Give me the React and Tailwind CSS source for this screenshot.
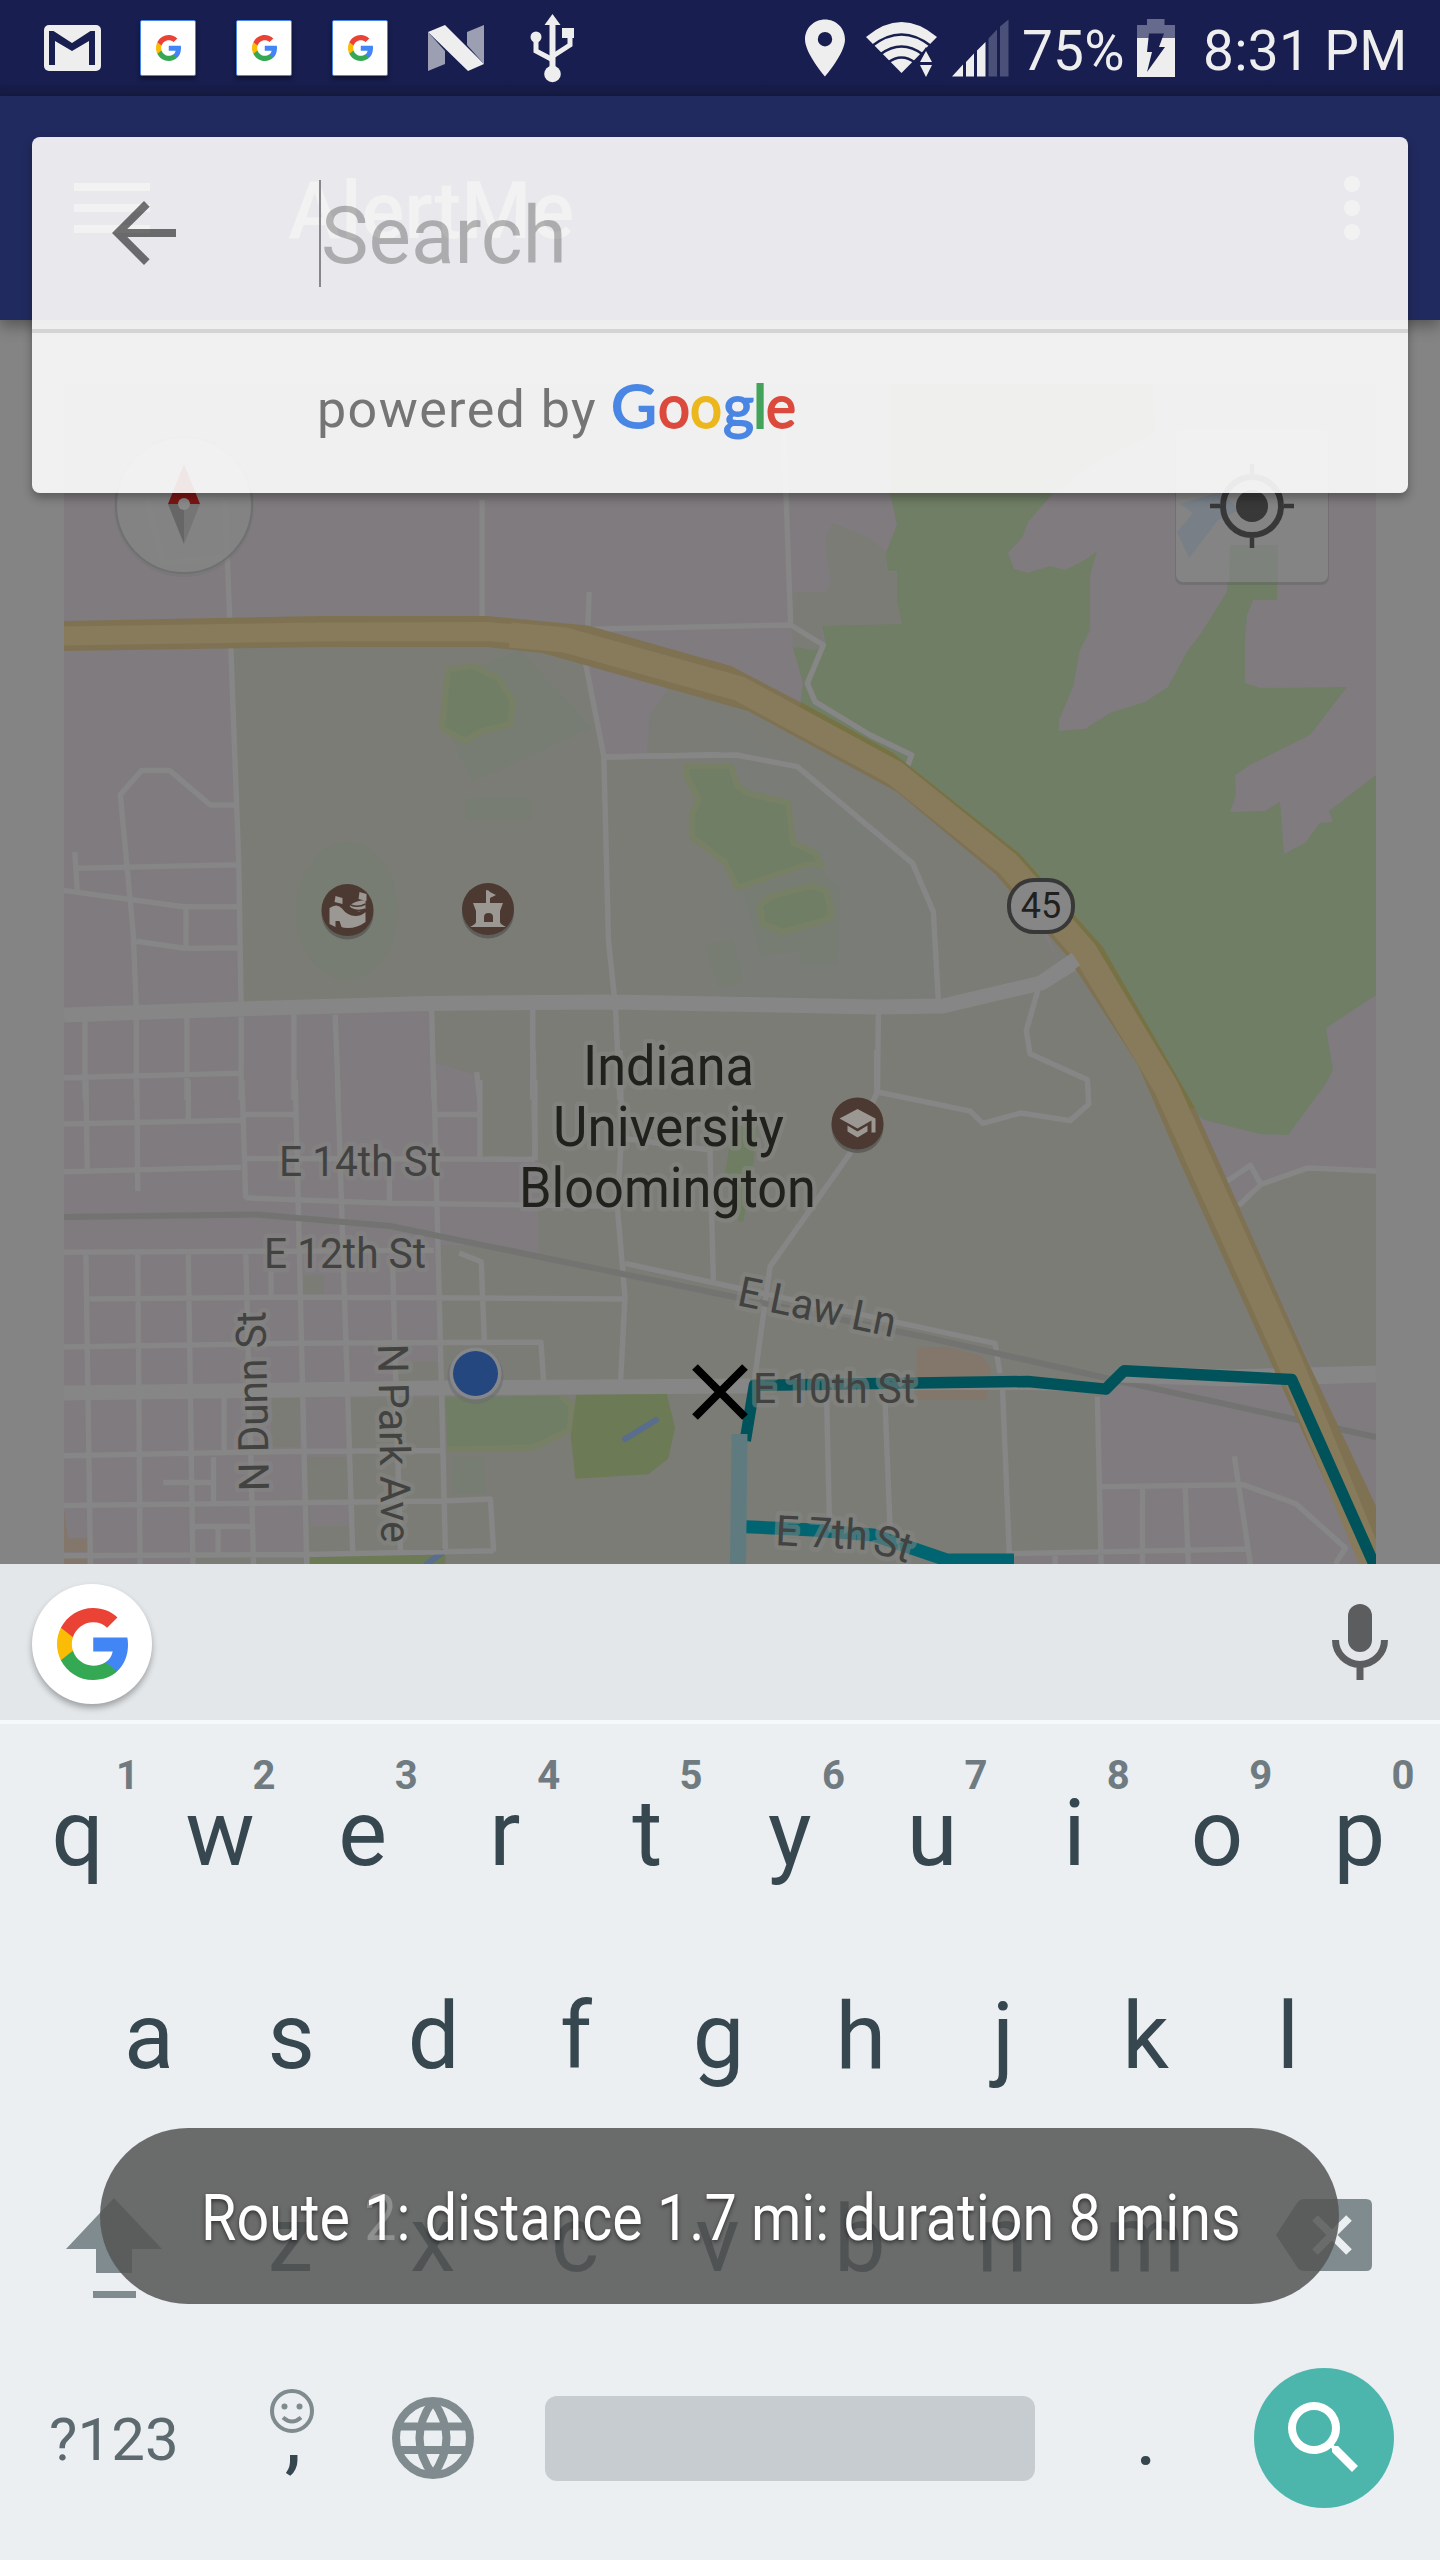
import React from "react";

const GoogleG = ({ className }) => (
  <svg viewBox="1 1 21.56 22" preserveAspectRatio="none" className={className}>
    <path fill="#4285F4" d="M22.56 12.25c0-.78-.07-1.53-.2-2.25H12v4.26h5.92c-.26 1.37-1.04 2.53-2.21 3.31v2.77h3.57c2.08-1.92 3.28-4.74 3.28-8.09z" />
    <path fill="#34A853" d="M12 23c2.97 0 5.46-.98 7.28-2.66l-3.57-2.77c-.98.66-2.23 1.06-3.71 1.06-2.86 0-5.29-1.93-6.16-4.53H2.18v2.84C3.99 20.53 7.7 23 12 23z" />
    <path fill="#FBBC05" d="M5.84 14.09c-.22-.69-.35-1.43-.35-2.09s.13-1.43.35-2.09V7.07H2.18C1.43 8.55 1 10.22 1 12s.43 3.45 1.18 4.93l2.85-2.22.81-.62z" />
    <path fill="#EA4335" d="M12 5.38c1.62 0 3.06.56 4.21 1.64l3.15-3.15C17.45 2.09 14.97 1 12 1 7.7 1 3.99 3.47 2.18 7.07l3.66 2.84c.87-2.6 3.3-4.53 6.16-4.53z" />
  </svg>
);

const NotificationSquare = ({ className }) => (
  <div className={`flex h-14 w-14 shrink-0 items-center justify-center rounded-[2px] border border-[#4a86e8] bg-white shadow-[0_3px_4px_rgba(0,0,0,0.4)] ${className}`}>
    <GoogleG className="h-[26px] w-[25px]" />
  </div>
);

function StatusBar() {
  return (
    <header className="flex h-24 items-center bg-gradient-to-b from-[#181e4f] from-85% to-[#151b42] pl-[44px] text-[55px] leading-[96px] text-[#eeeeee]">
      <svg viewBox="44 0 57 96" className="h-24 w-[57px] shrink-0">
        <rect x="44" y="25" width="57" height="46" rx="5" fill="#eee" />
        <path d="M49 65V31h4.500L72 43l18.500-12H95v34h-6V41L72 51 55 41v24z" fill="#181e4f" />
      </svg>
      <NotificationSquare className="ml-[39px]" />
      <NotificationSquare className="ml-10" />
      <NotificationSquare className="ml-10" />
      <svg viewBox="428 0 56 96" className="ml-10 h-24 w-14 shrink-0">
        <path d="M428 32l17 19v13l-17 7zM467 32l17-7v39l-17-19z" fill="#9c9eb2" />
        <path d="M428 32l17-7 39 39-16 7z" fill="#eee" />
      </svg>
      <svg viewBox="530 0 45 96" className="ml-[46px] h-24 w-[45px] shrink-0" fill="#eee">
        <path d="M552.500 14l8 11h-5v42h-6V25h-5z" />
        <circle cx="552.500" cy="74" r="8.300" />
        <circle cx="536" cy="37" r="5.500" />
        <path d="M562 28h12v10h-12z" />
        <path d="M536 38v13l17 9M570 37v8l-17 11" fill="none" stroke="#eee" strokeWidth="5" />
      </svg>
      <svg viewBox="804 0 42 96" className="ml-[229px] h-24 w-[42px] shrink-0">
        <path fillRule="evenodd" fill="#eee" d="M825 19.500c-11 0-20 8.500-20 20 0 14 20 37 20 37s20-23 20-37c0-11.500-9-20-20-20zm0 12.500a7.200 7.200 0 110 14.400 7.200 7.200 0 010-14.400z" />
      </svg>
      <svg viewBox="866 0 72 96" className="ml-5 h-24 w-[72px] shrink-0">
        <path fill="#eee" d="M901.500 73L866 37q35.500-30 71 0z" />
        <g fill="none" stroke="#181e4f" strokeWidth="2.500">
          <path d="M872 46q29.500-23 59 0" />
          <path d="M880 54.500q21.500-16 43 0" />
          <path d="M888 62.500q13.500-10 27 0" />
        </g>
        <path fill="#181e4f" d="M926 47l12 22v12h-20V60z" />
        <path fill="#eee" d="M926 51l6 11h-12zM926 77l-6-12h12z" />
      </svg>
      <svg viewBox="951 0 58 96" className="ml-[13px] h-24 w-[58px] shrink-0">
        <path fill="#eee" d="M952 76.500l11-12v12zM966 76.500V62l8-8.500v23zM977 76.500V50.500l8.500-8.500v34.500z" />
        <path fill="#4a5078" d="M988.500 76.500v-38l8.500-9v47zM1000 76.500v-50l8.500-7v57z" />
      </svg>
      <span className="ml-[13px] w-[112px] shrink-0 pt-1.5 tracking-[0.2px]">75%</span>
      <svg viewBox="1136 0 40 96" className="ml-[2px] h-24 w-10 shrink-0">
        <path fill="#666b8d" d="M1137 38V25h10v-6h17.500v6h10.500v13z" />
        <path fill="#eee" d="M1137 38h38v39h-38z" />
        <path fill="#181e4f" d="M1149 33.500h15l-5 13.500h6l-18 25 5-20h-5z" />
      </svg>
      <span className="ml-[27px] shrink-0 whitespace-nowrap pt-1.5 tracking-[0.3px]">8:31 PM</span>
    </header>
  );
}

function AppBar() {
  return (
    <div className="relative flex h-56 items-center bg-[#212a5e] pl-[74px] shadow-[0_6px_14px_rgba(0,0,0,0.35)]">
      <div className="flex w-[76px] flex-col gap-[13px]">
        <i className="h-2 bg-[#8c8c8c]" />
        <i className="h-2 bg-[#8c8c8c]" />
        <i className="h-2 bg-[#8c8c8c]" />
      </div>
      <h1 className="ml-[138px] pt-[5px] text-[80px] font-medium leading-none text-[#8c8c8c]">AlertMe</h1>
      <div className="ml-auto mr-20 flex flex-col gap-2">
        <i className="h-4 w-4 rounded-full bg-[#8c8c8c]" />
        <i className="h-4 w-4 rounded-full bg-[#8c8c8c]" />
        <i className="h-4 w-4 rounded-full bg-[#8c8c8c]" />
      </div>
    </div>
  );
}

// Map sheets: every sheet keeps its own local grid.
const NW = "translate(0 500) scale(.4592 .3827)";
const NE = "translate(720 560) scale(.4592 .3827)";
const SW = "translate(0 1080) scale(.4592 .3827)";
const SE = "translate(720 1060) scale(.4592 .3827)";
const MID = "translate(560 490) scale(.33333)";
const CORE = "translate(480 1050) scale(.33333)";

const OLIVE = "#7b7c76";
const FOREST = "#707e65";
const FAINT = "#777d72";
const PURPLE = "#7f7b7f";

const streets = [
  [NW, "M490 0L500 300 520 950 525 1320M1050 0V303M1283 240L1280 340M1275 425L1315 670 1325 1150 1338 1300M1315 672L1568 665M510 797H458L370 707H308L262 770 290 1130 297 1330M163 920L168 1020M170 962L515 953M139 1020L400 1063 520 1062M405 1065V1170M297 1153L405 1172 520 1170M320 0L355 165 495 150M185 1350V1568M297 1350V1568M407 1350V1568M525 1350V1568M640 1345V1568M730 1345L737 1568M940 1335L945 1568M1160 1325V1568M1340 1320L1350 1568M139 1510L520 1498M1038 1495L1045 1568"],
  [MID, "M670 -240L678 10 692 405 790 465 742 580 765 635 930 735 1055 795 1040 835M90 418L692 405M130 800L530 795 712 830 1058 1120 1120 1265 1135 1530"],
  [NE, "M345 1180L343 1390 545 1440 572 1472 655 1445 762 1465 803 1422 800 1358 675 1290 667 1230 692 1125"],
  [CORE, "M1190 0V130L1110 310 870 650 822 1000M160 0L165 325M420 0L425 250 412 470 435 740 422 990M435 640L800 720 1545 880 1560 970M425 265L690 300 700 690M1040 1050L1048 1400M1215 1050L1230 1430"],
  [SW, "M139 115L525 105M139 240L525 228M530 90H640M950 90H1040M530 205L1165 207M535 308L850 322 1345 330M139 450L945 445M195 572L660 567 1360 572M139 698L650 688 1178 685 1184 790M139 982L660 970 965 968M139 1112L965 1100 1068 1095 1075 1232M139 1243L665 1240 1075 1230M355 1052H465M425 1167H545M475 1167V1240M187 0L190 235M187 450L197 1265M298 0L300 290M300 450L305 1265M410 0V105M410 450L420 1265M527 0L535 310M535 450L552 1265M590 500V565M643 0L668 1265M735 0L768 1230M848 205V320M855 480L872 1230M945 0L970 1235M1045 0V210M1165 0V210M488 830V970M465 985V1105M1000 452L1048 475 1055 690"],
  [SE, "M822 880L830 1317M615 850L630 1290M830 1115L1140 1110 1255 1160 1362 1275 1340 1317M630 1290L1155 1278M920 1115V1317M1013 1115L1020 1317M1120 1035L1155 1317M730 1290V1317M1100 320L1155 275 1178 325 1280 282 1429 290M1178 325L1130 380"],
];

const Label = ({ x, y, w, size = 42, rot = 0, dark, children }) => (
  <text
    transform={`translate(${x} ${y}) rotate(${rot})`}
    textLength={w}
    lengthAdjust="spacingAndGlyphs"
    fontSize={size}
    fill={dark ? "#20201d" : "#424241"}
    stroke="#868683"
    strokeOpacity=".55"
    strokeWidth="9"
    strokeLinejoin="round"
    paintOrder="stroke"
    className="font-['Roboto',sans-serif]"
  >
    {children}
  </text>
);

const Pin = ({ x, y, children }) => (
  <g transform={`translate(${x} ${y})`}>
    <circle cy="3.500" r="26" fill="#5e5f5b" />
    <circle r="26" fill="#4c3932" />
    {children}
  </g>
);

function MapCanvas() {
  return (
    <svg viewBox="64 384 1312 1180" className="block h-[1180px] w-[1312px]">
      <rect x="64" y="384" width="1312" height="1180" fill={PURPLE} />

      {/* campus ground */}
      <g fill={OLIVE}>
        <path d="M232 636L500 632 585 650 700 690 890 775 1030 910 1100 1040 1290 1370 1101 1388V1551H1010V1564H193V1553H305V1457H350V1398H440V1245H538V1160H480V1076L436 1063 432 1010 244 1005z" />
        <path d="M833 523L867 537 887 552 888 572 898 572 903 623 820 627 825 650 793 647 790 592 825 592 831 583 825 540z" />
        <path transform={SE} d="M1130 385L1178 330 1280 285 1429 292V800H1290z" />
        <path d="M271 1398h29v49h-29zM352 1398h95v160h-95zM300 1275h24v20h-24zM398 1362h46v20h-46z" />
        <path d="M1040 910L1100 950 1195 1108 1300 1362H1200z" />
      </g>
      <path fill={PURPLE} d="M585 640L668 690 650 715 647 755 604 755 586 665zM483 1162h35v41h-35zM480 1210h58v44l-58-14zM310 1500h40v26h-40z" />
      <path transform={NE} fill="#7a7c79" d="M0 400L165 540 420 800 470 920 475 1140H0z" opacity=".5" />

      {/* faint lawns */}
      <g fill={FAINT}>
        <path d="M482 665L520 650 592 728 472 782 450 735zM466 798h66v22h-66z" />
        <ellipse cx="347" cy="911" rx="51" ry="69" />
        <path transform={MID} d="M550 1200L780 1130 840 1200 830 1420H720V1385L600 1395zM435 1365L520 1350 550 1480 475 1495z" />
        <path transform={SW} d="M985 985h70v95h-70z" />
      </g>

      {/* woods */}
      <path fill={FOREST} d="M890 384V493L897 525 886 553 888 571 897 571 897 600 902 624 822 626 826 645 815 650 793 647 803 683 800 705 900 770 1020 865 1100 960 1190 1110 1205 1120 1260 1134 1288 1135 1325 1085 1333 1070 1326 1028 1376 995V775L1329 811 1333 822 1320 823 1305 843 1284 854 1280 802 1265 811 1230 812 1236 795 1235 775 1250 765 1310 735 1347 687 1260 688 1245 683V640L1247 615 1253 600 1277 600 1278 540H1230L1227 592 1200 635 1188 650 1168 687 1145 702 1110 713 1085 729 1059 731V720L1073 687 1080 650 1090 630V575L1097 551 1085 560 1065 570 1050 566 1028 573 1014 569 1008 553 1022 538 1028 522 1053 493 1100 460 1155 435 1154 384z" />
      <path fill="#7a828b" d="M1180 504L1310 442 1326 465 1218 520 1189 558 1177 532 1193 513z" />
      <g fill={FOREST} stroke="#778064" strokeWidth="6">
        <path d="M448 670L473 666 498 678 513 701 510 724 482 731 465 741 442 728z" />
        <path d="M687 766H731L737 785 747 793 788 803 793 843 815 853 821 864 806 865 737 888 725 862 692 837V813L699 800 687 777z" />
        <path d="M760 905L772 896 811 886 826 891 831 914 825 920 783 932 763 924z" />
      </g>
      <path transform={CORE} fill="#6f7d62" d="M760 225L830 235 820 340 790 515 775 515 765 390 735 370z" />
      <g transform={SW}>
        <path d="M970 830L1215 825 1245 850 1240 915 1160 965 975 965z" fill={FOREST} />
        <path d="M1222 828L1245 850 1240 915 1160 960 975 965" fill="none" stroke="#778064" strokeWidth="6" vectorEffect="non-scaling-stroke" />
        <path d="M1255 822L1452 820 1470 910 1455 990 1412 1030 1253 1042 1243 930zM675 1240H970V1265H675z" fill="#6c7a55" />
        <path d="M139 1120L148 1198H190V1232H139zM139 1248H190V1265H139z" fill="#83766b" />
      </g>
      <path transform={SE} d="M428 752L500 750 570 775 590 805 580 888H428z" fill="#83766b" />
      <path d="M625 1439l31-19M427 1564l16-12" stroke="#596d8c" strokeWidth="6" strokeLinecap="round" />

      {/* streets */}
      {streets.map(([tf, d], i) => (
        <path key={i} transform={tf} d={d} fill="none" stroke="#868686" strokeWidth="5.500" strokeLinejoin="round" vectorEffect="non-scaling-stroke" />
      ))}
      <g fill="none" stroke="#737371" strokeWidth="6">
        <path d="M64 1217L257 1214.500 390 1226 720 1294 927 1337.500 1106 1378 1376 1437" />
      </g>
      <g fill="none" stroke="#868686" strokeLinejoin="round">
        <path strokeWidth="15" d="M64 1015L239 1009 427 1003.500 611 1002 720 1004 876 1007 943 1006 1041 983 1075 962" />
        <path strokeWidth="15" d="M64 1393L432 1388 750 1386" />
        <path strokeWidth="8" d="M750 1386L1030 1386 1100 1388" />
        <path strokeWidth="17" d="M1120 1374L1230 1378 1376 1374" />
      </g>

      {/* state road 45 */}
      <path fill="#7f7252" d="M64 621L321 616 487 616 588 625.500 731 666 798 701 893 753 1019 853 1103 947 1195 1108 1308 1362 1376 1506V1564H1363L1269 1358.500 1179 1160 1138 1065 1067 956 995 874 897 792 748 711 542 653 487 647 321 647 64 651z" />
      <path fill="none" stroke="#777243" strokeWidth="6" d="M800 705L892 756 1017 856 1100 949 1192 1109" />
      <g fill="none" stroke="#877b5b" strokeLinejoin="round">
        <path strokeWidth="19" d="M64 636L321 632 487 631.500 540 636" />
        <path strokeWidth="25" d="M510 635L565 640 739 688.500 895 773 1008 864 1085 952 1166 1087 1289 1360 1383 1590" />
      </g>
      <path stroke="#868686" strokeWidth="15" d="M1041 983L1076 959" />

      {/* routes */}
      <g transform={SE} fill="none">
        <path d="M55 995L75 850 670 840 840 860 880 812 1245 835 1427 1325" stroke="#00535a" strokeWidth="11.500" strokeLinejoin="round" vectorEffect="non-scaling-stroke" />
      </g>
      <path transform={CORE} fill="none" stroke="#006571" strokeWidth="13" vectorEffect="non-scaling-stroke" strokeLinejoin="round" d="M798 1430L1000 1440 1180 1455 1400 1530H1602" />
      <path d="M731.500 1434H747.500L746 1564H730z" fill="#5f7b80" />

      {/* labels */}
      <Label x={583} y={1084.500} w={171} size={56} dark>Indiana</Label>
      <Label x={553} y={1146} w={231} size={56} dark>University</Label>
      <Label x={519} y={1207} w={297} size={56} dark>Bloomington</Label>
      <Label x={279} y={1176} w={162}>E 14th St</Label>
      <Label x={264} y={1267.500} w={162}>E 12th St</Label>
      <Label x={269} y={1491} w={180} rot={-91.200}>N Dunn St</Label>
      <Label x={378} y={1344} w={199} rot={89}>N Park Ave</Label>
      <Label x={736} y={1305} w={160} rot={11.600}>E Law Ln</Label>
      <Label x={753} y={1403} w={162}>E 10th St</Label>
      <Label x={775} y={1545} w={92} rot={3}>E 7th</Label>
      <Label x={871} y={1552} w={38} rot={17}>St</Label>

      <rect x="1009" y="880" width="64" height="52" rx="25" fill="#868686" stroke="#383838" strokeWidth="4" />
      <text x="1041" y="918" textAnchor="middle" fontSize="36" fill="#20201f">45</text>

      {/* places */}
      <Pin x={347.500} y={910}>
        <path fill="#9b9793" d="M-18-2q7-5 12 0 6 8 14 8 6 0 10-4v10q-8 6-18 6-4 0-6-1l-2-6h-4v6l-6-3z" />
        <path fill="#9b9793" d="M-12-14l7 2v6l-8-2zM12-18l7 2v7l-8-2z" />
        <path d="M2-4q4-5 16-6v9q-8 6-16-3z" fill="#9b9793" />
        <path d="M3-5q8 3 15-1M4-1q7 3 14 0" stroke="#4c3932" strokeWidth="1.500" fill="none" />
      </Pin>
      <Pin x={488} y={909}>
        <path fill="#9b9793" fillRule="evenodd" d="M-15-6H-2v-13q3 0 4 2l6 3-6 3v5h13l-3 8v11q0 2 6 5h-36q6-3 6-5V2zM-4 13h9V8q0-4-4.500-4T-4 8z" />
      </Pin>
      <Pin x={857.500} y={1123.500}>
        <path fill="#9b9793" d="M0-14.500L18-5V9h-4V-3L0 5-18-5zM-10 2v6L0 14l10-6V2L0 8z" />
      </Pin>

      <circle cx="475.500" cy="1376" r="28" fill="#6c6e6e" opacity=".6" />
      <circle cx="475.500" cy="1373.500" r="26" fill="#85878b" />
      <circle cx="475.500" cy="1373.500" r="22.500" fill="#24477f" />
      <path d="M695 1367l50 50M745 1367l-50 50" stroke="#000" strokeWidth="8" />

      {/* compass and locate controls */}
      <circle cx="184" cy="507" r="70" fill="#6f6f6f" opacity=".25" />
      <circle cx="184" cy="505" r="68" fill="#848484" fillOpacity=".92" stroke="#6f7070" strokeWidth="2" />
      <path d="M184 464l16 40h-32z" fill="#7d1513" />
      <path d="M168 504h16v40z" fill="#666" />
      <path d="M184 504h16l-16 40z" fill="#757575" />
      <circle cx="184" cy="504" r="6" fill="#8a8a8a" />

      <rect x="1175" y="432" width="154" height="153" rx="8" fill="#5c5c5c" opacity=".35" />
      <rect x="1176" y="430" width="152" height="152" rx="7" fill="#848484" />
      <path fill="#787f87" d="M1180 504L1220 492 1240 510 1218 520 1189 558 1177 532 1193 513z" />
      <path fill="#7c8179" d="M1230 545h48v37h-49z" opacity=".7" />
      <g stroke="#383838" fill="none">
        <circle cx="1252" cy="506" r="29" strokeWidth="6" />
        <path strokeWidth="4.500" d="M1210 506h10M1284 506h10M1252 464v10M1252 538v10" />
      </g>
      <circle cx="1252" cy="506" r="16" fill="#383838" />
    </svg>
  );
}

function SearchCard() {
  return (
    <section className="absolute left-8 top-[137px] flex h-[356px] w-[1376px] flex-col rounded-[8px] bg-[#fcfcfc]/91 shadow-[0_5px_10px_rgba(0,0,0,0.3)]">
      <div className="flex h-48 items-center">
        <svg viewBox="0 0 24 24" className="ml-16 h-24 w-24" fill="black" fillOpacity=".54">
          <path d="M20 11H7.830l5.590-5.590L12 4l-8 8 8 8 1.410-1.410L7.830 13H20z" />
        </svg>
        <i className="ml-[127px] h-[107px] w-[2px] bg-[#85878a]" />
        <span className="pt-[6px] text-[80px] leading-none text-black/26">Search</span>
      </div>
      <div className="h-1 bg-[#d4d4d4]" />
      <div className="flex flex-1 items-center pl-[285px]">
        <span className="w-[294px] whitespace-nowrap pb-[6px] text-[52px] leading-none tracking-[1.4px] text-[#757575]">powered by</span>
        <svg viewBox="611 371 190 84" className="h-[84px] w-[190px] overflow-visible" fontSize="60" strokeWidth="1.800">
          <g className="font-['Lato','Roboto',sans-serif]">
            <text x="611" y="428" fill="#4a86e4" stroke="#4a86e4" textLength="46" lengthAdjust="spacingAndGlyphs">G</text>
            <text x="658" y="428" fill="#db4a3d" stroke="#db4a3d" textLength="32" lengthAdjust="spacingAndGlyphs">o</text>
            <text x="690" y="428" fill="#ebb71d" stroke="#ebb71d" textLength="32" lengthAdjust="spacingAndGlyphs">o</text>
            <text x="723" y="428" fill="#4a86e4" stroke="#4a86e4" textLength="31" lengthAdjust="spacingAndGlyphs">g</text>
            <text x="753" y="428" fill="#44a35b" stroke="#44a35b">l</text>
            <text x="766" y="428" fill="#db4a3d" stroke="#db4a3d" textLength="30" lengthAdjust="spacingAndGlyphs">e</text>
          </g>
        </svg>
      </div>
    </section>
  );
}

const TOP_ROW = [["q", "1"], ["w", "2"], ["e", "3"], ["r", "4"], ["t", "5"], ["y", "6"], ["u", "7"], ["i", "8"], ["o", "9"], ["p", "0"]];

const Key = ({ letter, hint }) => (
  <div className="relative flex w-[142.4px] items-center justify-center pr-[3px]">
    {letter}
    {hint && (
      <span className={`absolute top-[19px] text-[40px] font-bold leading-[50px] text-[#6f7b81] ${hint === "1" ? "left-[108px]" : "left-[102px]"}`}>
        {hint}
      </span>
    )}
  </div>
);

function Keyboard() {
  return (
    <section className="h-[996px] bg-[#ebeff2] text-[92px] leading-none text-[#37474f]">
      <div className="flex h-[156px] items-center justify-between bg-[#e3e7ea] pl-8 pr-[52px]">
        <div className="mt-1 flex h-[120px] w-[120px] items-center justify-center rounded-full bg-white pl-[1px] shadow-[0_4px_6px_rgba(0,0,0,0.3)]">
          <GoogleG className="h-[72px] w-[71px]" />
        </div>
        <svg viewBox="1332 1604 56 76" className="h-[76px] w-14">
          <rect x="1348" y="1604" width="24" height="48" rx="12" fill="#5c5d5f" />
          <path d="M1335.500 1640a24.500 24.500 0 0049 0M1360 1664v16" fill="none" stroke="#5c5d5f" strokeWidth="7" />
        </svg>
      </div>
      <div className="h-1 bg-[#f6f8fa]" />
      <div className="mt-2 flex h-[203px] justify-center">
        {TOP_ROW.map(([l, h]) => <Key key={l} letter={l} hint={h} />)}
      </div>
      <div className="flex h-[203px] justify-center">
        {"asdfghjkl".split("").map((l) => <Key key={l} letter={l} />)}
      </div>
      <div className="flex h-[203px] items-stretch justify-between pl-[66px] pr-[68px]">
        <svg viewBox="66 2138 96 203" className="h-[203px] w-24" fill="#7f8b8f">
          <path d="M114 2198l48 51h-30v24H96v-24H66zM93 2291h43v7H93z" />
        </svg>
        <div className="flex">
          {"zxcvbnm".split("").map((l) => <Key key={l} letter={l} />)}
        </div>
        <svg viewBox="1276 2138 96 203" className="h-[203px] w-24">
          <path fill="#7f8b8f" d="M1276 2235l21-32q3-4 7-4h62q6 0 6 6v60q0 6-6 6h-62q-4 0-7-4z" />
          <path d="M1315 2218l34 34M1349 2218l-34 34" stroke="#ebeff2" strokeWidth="8" />
        </svg>
      </div>
      <div className="flex h-[194px] items-center pl-[49px]">
        <span className="w-[172px] pt-[3px] text-[60px] tracking-[0.1px] text-[#5c6a70]">?123</span>
        <div className="relative flex h-full w-[142px] items-center justify-center">
          <svg viewBox="268 2387 48 48" className="absolute left-[47px] top-[46px] h-12 w-12" fill="none" stroke="#7f8b8f" strokeWidth="4">
            <circle cx="292" cy="2411" r="20" />
            <path d="M283 2417.500q9 8 18 0" />
            <circle cx="284.500" cy="2406.500" r="3" fill="#7f8b8f" stroke="none" />
            <circle cx="299.500" cy="2406.500" r="3" fill="#7f8b8f" stroke="none" />
          </svg>
          <span className="pb-[4px] pl-[2px] text-[84px]">,</span>
        </div>
        <svg viewBox="392 2397 82 82" className="ml-[29px] h-[82px] w-[82px]" fill="none" stroke="#7f8b8f" strokeWidth="8">
          <circle cx="433" cy="2438" r="37" />
          <path d="M399 2426.500h68M399 2450h68M433 2401q-27 37 0 74M433 2401q27 37 0 74" />
        </svg>
        <div className="ml-[71px] h-[85px] w-[490px] rounded-[12px] bg-[#c7ccd0]" />
        <span className="ml-[99px] w-[24px] pb-[2px] text-center text-[84px]">.</span>
        <div className="ml-[96px] flex h-[140px] w-[140px] items-center justify-center rounded-full bg-[#4db6ac]">
          <svg viewBox="0 0 24 24" className="h-24 w-24" fill="white">
            <path d="M15.500 14h-.79l-.28-.27A6.471 6.471 0 0016 9.500 6.500 6.500 0 109.500 16c1.610 0 3.090-.59 4.230-1.570l.27.28v.79l5 4.990L20.490 19l-4.990-5zm-6 0C7.010 14 5 11.990 5 9.500S7.010 5 9.500 5 14 7.010 14 9.500 11.990 14 9.500 14z" />
          </svg>
        </div>
      </div>
    </section>
  );
}

function Toast() {
  return (
    <div className="absolute left-[100px] top-[2128px] flex h-44 w-[1239px] items-center rounded-full bg-[#555555]/86 pl-[101px]">
      <p className="origin-left scale-x-[0.897] whitespace-nowrap pt-[5px] text-[64px] leading-none text-white [text-shadow:0_2px_5px_rgba(0,0,0,0.55)]">
        Route{" "}
        <span className="relative inline-block leading-none">
          1<span className="absolute left-0 top-0 leading-none text-white/25 [text-shadow:none]">2</span>
        </span>
        : distance 1.7 mi: duration 8 mins
      </p>
    </div>
  );
}

export default function App() {
  return (
    <main className="relative flex h-[2560px] w-[1440px] flex-col overflow-hidden bg-[#848484] font-['Roboto',sans-serif]">
      <StatusBar />
      <div className="relative z-10">
        <AppBar />
      </div>
      <div className="px-16 pt-16">
        <MapCanvas />
      </div>
      <div className="relative">
        <Keyboard />
      </div>
      <div className="absolute inset-0 z-20">
        <SearchCard />
        <Toast />
      </div>
    </main>
  );
}
